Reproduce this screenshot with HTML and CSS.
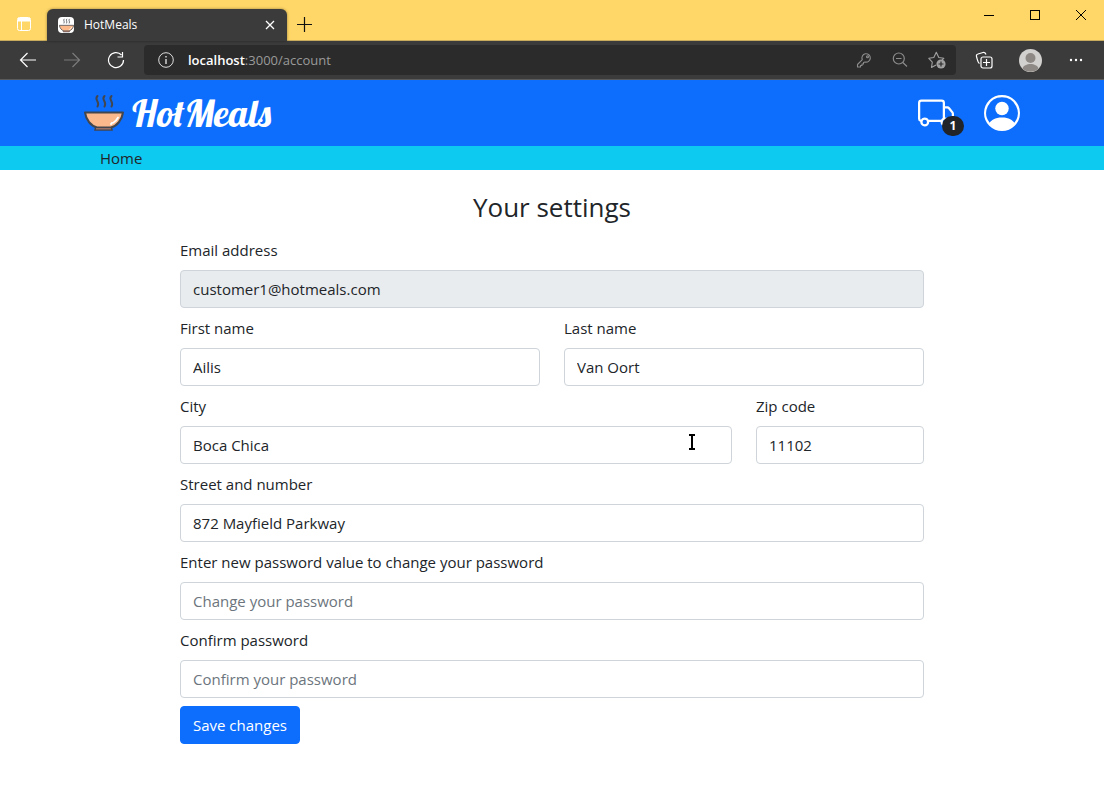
FILE: index.html
```html
<!DOCTYPE html>
<html lang="en">
<head>
<meta charset="utf-8">
<meta name="viewport" content="width=device-width, initial-scale=1">
<title>HotMeals</title>
<link rel="stylesheet" href="styles.css">
</head>
<body>
<svg class="defs" width="0" height="0" aria-hidden="true">
  <symbol id="bowl" viewBox="0 0 40 38">
    <g fill="none" stroke="#42474f" stroke-width="2" stroke-linecap="round"><path d="M13.500 2c-4 4 3 5 0 10.500M20.500 2c-4 4 3 5 0 10.500M27.500 2c-4 4 3 5 0 10.500"/></g>
    <path d="M12 32l-1 4h17l-1-4z" fill="#f09a78" stroke="#42474f" stroke-width="1.500"/>
    <path d="M1 18.500h38C38 26 33 32 27 33.500H13C7 32 2 26 1 18.500z" fill="#fcb98b" stroke="#42474f" stroke-width="2" stroke-linejoin="round"/>
    <path d="M27 30l1-1M29.500 28.500c2-1 3.500-3 4.500-5" fill="none" stroke="#fff" stroke-width="1.800" stroke-linecap="round"/>
  </symbol>
</svg>
<div class="tabstrip">
  <button class="icon-btn tab-actions" aria-label="Tab actions"><svg width="16" height="16" viewBox="0 0 16 16" fill="none" stroke="#fff"><rect x="1.500" y="1.500" width="13" height="13" rx="2"/><path d="M2 3h12M2 4.500h12" stroke-width="2"/><path d="M5.500 5v9"/></svg></button>
  <div class="tab">
    <span class="favicon"><svg width="15" height="15"><use href="#bowl"/></svg></span>
    <span class="tab-title">HotMeals</span>
    <button class="icon-btn" aria-label="Close tab"><svg width="10" height="10" viewBox="0 0 10 10" stroke="#fff" stroke-width="1.300"><path d="M1 1l8 8M9 1l-8 8"/></svg></button>
  </div>
  <button class="icon-btn new-tab" aria-label="New tab"><svg width="15" height="15" viewBox="0 0 15 15" stroke="#111" stroke-width="1.200"><path d="M7.500 0v15M0 7.500h15"/></svg></button>
  <div class="window-buttons">
    <button class="icon-btn" aria-label="Minimize"><svg width="12" height="12" viewBox="0 0 12 12" stroke="#000"><path d="M1 6.500h10"/></svg></button>
    <button class="icon-btn" aria-label="Maximize"><svg width="12" height="12" viewBox="0 0 12 12" fill="none" stroke="#000"><rect x="1.500" y="1.500" width="9" height="9"/></svg></button>
    <button class="icon-btn" aria-label="Close"><svg width="12" height="12" viewBox="0 0 12 12" stroke="#000"><path d="M1 1l10 10M11 1L1 11"/></svg></button>
  </div>
</div>
<div class="toolbar">
  <div class="history">
    <button class="icon-btn" aria-label="Back"><svg width="18" height="16" viewBox="0 0 18 16" fill="none" stroke="#fff" stroke-width="1.200"><path d="M17 8H1.500M8.500 1l-7 7 7 7"/></svg></button>
    <button class="icon-btn" aria-label="Forward"><svg width="18" height="16" viewBox="0 0 18 16" fill="none" stroke="#7b7b7b" stroke-width="1.200"><path d="M1 8h15.500M9.500 1l7 7-7 7"/></svg></button>
    <button class="icon-btn" aria-label="Refresh"><svg width="18" height="18" viewBox="0 0 18 18" fill="none" stroke="#fff" stroke-width="1.200"><path d="M16.500 9A7.500 7.500 0 1 1 14.500 4M15.500 1v5h-5"/></svg></button>
  </div>
  <div class="address">
    <svg width="16" height="16" viewBox="0 0 16 16" fill="none" stroke="#ddd"><circle cx="8" cy="8" r="7.300"/><path d="M8 7v5M8 4v1.500" stroke-width="1.400"/></svg>
    <div class="url"><b>localhost</b>:3000/account</div>
    <button class="icon-btn" aria-label="Saved password"><svg width="16" height="16" viewBox="0 0 16 16" fill="none" stroke="#8c8c8c" stroke-width="1.100" stroke-linejoin="round"><path d="M6.300 7.700A4.200 4.200 0 1 1 9 10l-1.500.500v1.500H6V13.500H4.500V15h-3v-2.500z"/><circle cx="11.500" cy="4.800" r="1"/></svg></button>
    <button class="icon-btn" aria-label="Zoom out"><svg width="16" height="16" viewBox="0 0 16 16" fill="none" stroke="#8c8c8c" stroke-width="1.200"><circle cx="6.800" cy="6.500" r="5.500"/><path d="M4 6.500h5.500M10.800 10.500l4.200 4"/></svg></button>
    <button class="icon-btn" aria-label="Add to favorites"><svg width="18" height="18" viewBox="0 0 18 18" fill="none" stroke="#a0a0a0"><path d="M8 14l-4.500 2.500.800-5.300L.800 7.300l5-.800L8.300 1.300l2.500 5.200 5 .800-1.800 1.700" stroke-width="1.100" stroke-linejoin="round"/><circle cx="13" cy="13" r="4.600" fill="#a0a0a0" stroke="none"/><path d="M13 10.500v5M10.500 13h5" stroke="#2b2b2b" stroke-width="1.200"/></svg></button>
  </div>
  <div class="browser-actions">
    <button class="icon-btn" aria-label="Collections"><svg width="18" height="18" viewBox="0 0 18 18" fill="none" stroke="#fff" stroke-width="1.200"><path d="M4.500 12.500C3 12 3 11 1.500 5.500c-.400-1.500.300-2.200 1.500-2.500L8 1.500c2-.500 2.500.300 3 2"/><rect x="6" y="6" width="11" height="11" rx="2"/><path d="M11.500 8v7M8 11.500h7"/></svg></button>
    <button class="icon-btn" aria-label="Profile"><svg width="23" height="23" viewBox="0 0 23 23"><circle cx="11.500" cy="11.500" r="11.500" fill="#d3d1cf"/><circle cx="11.500" cy="9" r="5" fill="#8f8985"/><path d="M3.500 19.500c1.500-6 14.500-6 16 0a11.500 11.500 0 0 1-16 0z" fill="#8f8985"/></svg></button>
    <button class="icon-btn" aria-label="More"><svg width="14" height="4" viewBox="0 0 14 4" fill="#fff"><circle cx="2" cy="2" r="1.200"/><circle cx="7" cy="2" r="1.200"/><circle cx="12" cy="2" r="1.200"/></svg></button>
  </div>
</div>
<header class="site-header">
  <div class="container header-row">
    <a class="brand" href="#"><svg width="40" height="38"><use href="#bowl"/></svg><span>HotMeals</span></a>
    <div class="header-actions">
      <button class="icon-btn cart" aria-label="Delivery cart, 1 item"><svg width="36" height="36" viewBox="0 0 16 16" fill="#fff"><path d="M0 3.500A1.500 1.500 0 0 1 1.500 2h9A1.500 1.500 0 0 1 12 3.500V5h1.020a1.500 1.500 0 0 1 1.170.563l1.481 1.850a1.500 1.500 0 0 1 .329.938V10.500a1.500 1.500 0 0 1-1.500 1.500H14a2 2 0 1 1-4 0H5a2 2 0 1 1-3.998-.085A1.500 1.500 0 0 1 0 10.500v-7zm1.294 7.456A1.999 1.999 0 0 1 4.732 11h5.536a2.010 2.010 0 0 1 .732-.732V3.500a.5.5 0 0 0-.5-.5h-9a.5.5 0 0 0-.5.5v7a.5.5 0 0 0 .294.456zM12 10a2 2 0 0 1 1.732 1h.768a.5.5 0 0 0 .5-.5V8.350a.5.5 0 0 0-.110-.312l-1.480-1.850A.5.5 0 0 0 13.020 6H12v4zm-9 1a1 1 0 1 0 0 2 1 1 0 0 0 0-2zm9 0a1 1 0 1 0 0 2 1 1 0 0 0 0-2z"/></svg><span class="badge">1</span></button>
      <button class="icon-btn" aria-label="Account"><svg width="36" height="36" viewBox="0 0 16 16" fill="#fff"><path d="M11 6a3 3 0 1 1-6 0 3 3 0 0 1 6 0z"/><path fill-rule="evenodd" d="M0 8a8 8 0 1 1 16 0A8 8 0 0 1 0 8zm8-7a7 7 0 0 0-5.468 11.370C3.242 11.226 4.805 10 8 10s4.757 1.225 5.468 2.370A7 7 0 0 0 8 1z"/></svg></button>
    </div>
  </div>
</header>
<nav class="site-nav"><div class="container"><a href="#">Home</a></div></nav>
<main class="settings">
  <h1>Your settings</h1>
  <form class="form">
    <div class="field"><label for="email">Email address</label><input id="email" type="email" value="customer1@hotmeals.com" readonly></div>
    <div class="field half"><label for="first">First name</label><input id="first" type="text" value="Ailis"></div>
    <div class="field half"><label for="last">Last name</label><input id="last" type="text" value="Van Oort"></div>
    <div class="field wide"><label for="city">City</label><input id="city" type="text" value="Boca Chica"><svg class="pointer" width="8" height="16" viewBox="0 0 8 16" aria-hidden="true" fill="none" stroke="#000" stroke-width="2"><path d="M1 1h6M1 15h6M4 1v14"/></svg></div>
    <div class="field narrow"><label for="zip">Zip code</label><input id="zip" type="text" value="11102"></div>
    <div class="field"><label for="street">Street and number</label><input id="street" type="text" value="872 Mayfield Parkway"></div>
    <div class="field"><label for="password">Enter new password value to change your password</label><input id="password" type="password" placeholder="Change your password"></div>
    <div class="field"><label for="confirm">Confirm password</label><input id="confirm" type="password" placeholder="Confirm your password"></div>
    <div class="field"><button class="save" type="submit">Save changes</button></div>
  </form>
</main>
</body>
</html>
```
FILE: styles.css
```css
* { box-sizing: border-box; }
body {
  margin: 0;
  background: #fff;
  color: #212529;
  font: 15px/24px "Segoe UI", "Open Sans", "Noto Sans", sans-serif;
}
svg { display: block; flex: none; }
.defs { position: absolute; }
.icon-btn {
  display: flex;
  align-items: center;
  justify-content: center;
  padding: 0;
  border: 0;
  background: none;
  color: inherit;
  font: inherit;
}

/* browser frame */
.tabstrip {
  display: flex;
  align-items: flex-end;
  height: 41px;
  background: #ffd768;
  border-bottom: 1px solid #c8ab5c;
}
.tab-actions { width: 47px; height: 32px; }
.tab {
  display: flex;
  align-items: center;
  gap: 10px;
  width: 240px;
  height: 32px;
  margin-bottom: -1px;
  padding: 0 12px 0 11px;
  border-radius: 6px 6px 0 0;
  background: #3b3b3b;
  box-shadow: 0 0 3px #0006;
  color: #fff;
  font-size: 12px;
}
.favicon {
  display: flex;
  align-items: center;
  justify-content: center;
  width: 16px;
  height: 16px;
  border-radius: 4px;
  background: #fff;
}
.tab-title { flex: 1; }
.new-tab { width: 35px; height: 32px; }
.window-buttons { display: flex; align-self: flex-start; margin-left: auto; }
.window-buttons .icon-btn { width: 46px; height: 30px; }
.toolbar {
  display: flex;
  align-items: center;
  height: 39px;
  background: #3b3b3b;
  border-bottom: 1px solid #5b5b5b;
}
.history { display: flex; padding: 0 6px; }
.history .icon-btn { width: 44px; height: 30px; }
.address {
  display: flex;
  align-items: center;
  flex: 1;
  gap: 20px;
  height: 30px;
  padding: 0 10px 0 14px;
  border-radius: 4px;
  background: #2b2b2b;
}
.url { flex: 1; margin-left: -6px; color: #9a9a9a; font-size: 13px; }
.url b { color: #fff; font-weight: 600; }
.browser-actions { display: flex; padding: 0 5px; }
.browser-actions .icon-btn { width: 46px; height: 30px; }

/* site header */
.container { max-width: 960px; margin: 0 auto; padding: 0 12px; }
.site-header { background: #0d6efd; }
.header-row { display: flex; align-items: center; justify-content: space-between; height: 66px; }
.brand {
  display: flex;
  align-items: center;
  gap: 8px;
  color: #fff;
  font: 38px/40px Lobster, "Liberation Serif", serif;
  text-decoration: none;
}
.header-actions { display: flex; align-items: center; gap: 30px; }
.cart { position: relative; }
.badge {
  position: absolute;
  right: -10px;
  bottom: -5px;
  width: 22px;
  height: 20px;
  border-radius: 10px;
  background: #212529;
  color: #fff;
  font-size: 12px;
  font-weight: 700;
  line-height: 20px;
  text-align: center;
}
.site-nav { background: #0dcaf0; }
.site-nav a { display: inline-block; padding: 0 16px; color: #212529; text-decoration: none; vertical-align: top; }

/* account form */
.settings { max-width: 768px; margin: 0 auto; padding: 20px 12px; }
h1 { margin: 0 0 6px; font-size: 26px; font-weight: 500; line-height: 34px; text-align: center; }
.form { display: grid; grid-template-columns: repeat(12, 1fr); column-gap: 24px; }
.field { position: relative; grid-column: span 12; min-width: 0; margin-top: 8px; }
.half { grid-column: span 6; }
.wide { grid-column: span 9; }
.narrow { grid-column: span 3; }
.field label { display: block; margin-bottom: 8px; }
.field input {
  display: block;
  width: 100%;
  height: 38px;
  padding: 6px 12px;
  border: 1px solid #ced4da;
  border-radius: 4px;
  background: #fff;
  color: #212529;
  font: inherit;
}
.field input[readonly] { background: #e9ecef; }
.field input::placeholder { color: #6c757d; opacity: 1; }
.pointer { position: absolute; right: 36px; bottom: 14px; }
.save {
  height: 38px;
  padding: 0 12px;
  border: 1px solid #0d6efd;
  border-radius: 4px;
  background: #0d6efd;
  color: #fff;
  font: inherit;
}
```
